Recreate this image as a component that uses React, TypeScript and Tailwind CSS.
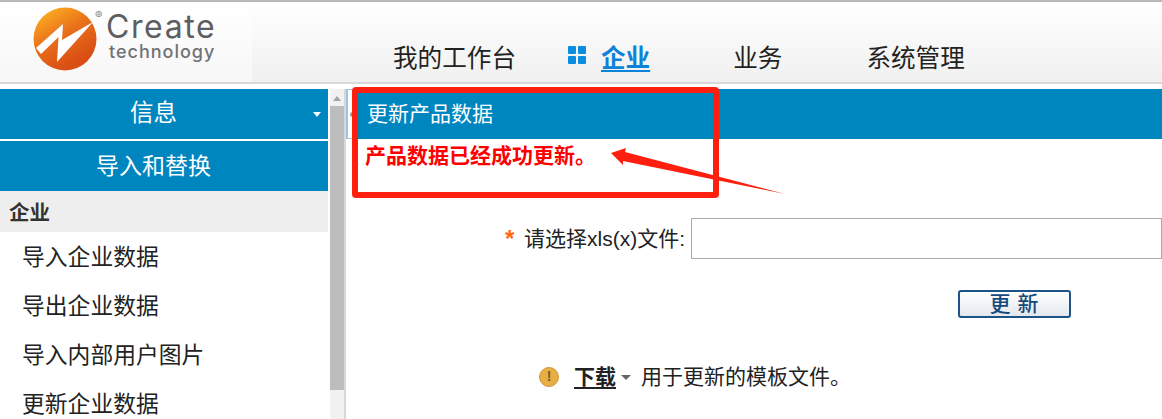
import React from "react";

const font = "font-['Liberation_Sans','Noto_Sans_CJK_SC',sans-serif]";

const Logo = () => (
  <div className="w-[252px] h-full flex items-start pl-[33px] pt-[5px] bg-gradient-to-b from-white to-[#f7f7f7]">
    <svg width="64" height="64" viewBox="0 0 64 64">
      <defs>
        <linearGradient id="orb" x1="0.2" y1="0" x2="0.7" y2="0.85">
          <stop offset="0" stopColor="#fdb022" />
          <stop offset="0.5" stopColor="#e9701a" />
          <stop offset="1" stopColor="#d94e14" />
        </linearGradient>
      </defs>
      <circle cx="32" cy="32" r="31.5" fill="url(#orb)" />
      <path d="M3 41 L30 17 L29 33 L60 15 L24 55 L25.5 30 L8 47 Z" fill="#fff" />
    </svg>
    <div className="relative ml-[9px] mt-[4px] text-[#5c5e60] font-['Inter',sans-serif]">
      <div className="text-[32px] leading-[32px] tracking-[1.6px]">Create</div>
      <div className="text-[18px] leading-[18px] tracking-[1px] ml-[3px] font-medium text-[#707274]">technology</div>
      <span className="absolute -left-[11px] -top-[1px] text-[11px] leading-none text-[#888]">®</span>
    </div>
  </div>
);

const Nav = () => (
  <nav className="flex items-center pl-[141px] pt-[34px] text-[24.6px] leading-[34px] text-[#222]">
    <span>我的工作台</span>
    <span className="grid grid-cols-2 gap-[2px] w-[18px] ml-[52px] mb-[8px]">
      <i className="w-[8px] h-[8px] rounded-[1px] bg-[#0a8ce0]" />
      <i className="w-[8px] h-[8px] rounded-[1px] bg-[#0a8ce0]" />
      <i className="w-[8px] h-[8px] rounded-[1px] bg-[#0a8ce0]" />
      <i className="w-[8px] h-[8px] rounded-[1px] bg-[#0a8ce0]" />
    </span>
    <span className="ml-[15px] text-[#0b83d9] font-bold underline underline-offset-[3px]">企业</span>
    <span className="ml-[83px]">业务</span>
    <span className="ml-[84px]">系统管理</span>
  </nav>
);

const Sidebar = () => (
  <aside className="w-[346px] shrink-0 flex border-r-2 border-[#d8d8d8] h-full">
    <div className="w-[328px] shrink-0">
      <div className="relative h-[50px] bg-[#0086bf] text-white text-[23.5px] flex items-center justify-center pr-[21px] mb-[2px]">
        信息
        <span className="absolute right-[7px] top-[23px] border-x-[4px] border-x-transparent border-t-[5px] border-t-white" />
      </div>
      <div className="h-[50px] bg-[#0086bf] text-white text-[23px] flex items-center justify-center pr-[21px]">导入和替换</div>
      <div className="h-[41px] bg-[#eeeeee] pl-[9px] pt-[4px] flex items-center text-[20.5px] font-bold text-[#333]">企业</div>
      <ul className="pl-[22px] pt-[1px] text-[22.8px] text-[#222]">
        <li className="h-[49px] leading-[49px]">导入企业数据</li>
        <li className="h-[49px] leading-[49px]">导出企业数据</li>
        <li className="h-[49px] leading-[49px]">导入内部用户图片</li>
        <li className="h-[49px] leading-[49px]">更新企业数据</li>
      </ul>
    </div>
    <div className="w-[16px] ml-[2px] bg-[#f1f1f1] flex flex-col items-center">
      <span className="mt-[7px] border-x-[4px] border-x-transparent border-b-[5px] border-b-[#a3a3a3]" />
      <span className="mt-[5px] w-[14px] h-[284px] bg-[#bdbdbd]" />
    </div>
  </aside>
);

const Main = () => (
  <main className="flex-1 min-w-0">
    <div className="flex h-[50px]">
      <div className="w-[12px] shrink-0 flex items-center border-l-[2px] border-y border-[#9cc4e4] bg-white pl-[2px]">
        <span className="w-[5px] h-[5px] rounded-full bg-[#999]" />
      </div>
      <div className="flex-1 bg-[#0086bf] text-white text-[21px] flex items-center pl-[9px]">更新产品数据</div>
    </div>
    <p className="pl-[19px] pt-[3px] text-[21px] leading-[28px] font-bold text-[#ff0000]">产品数据已经成功更新。</p>
    <div className="flex items-center mt-[48px] h-[41px] text-[21px] text-[#222]">
      <span className="ml-[159px] w-[19px] text-[24px] font-bold text-[#ff6a13]">*</span>
      <span>请选择xls(x)文件:</span>
      <div className="ml-[6px] flex-1 h-[41px] border border-[#aaaaaa] bg-white" />
    </div>
    <div className="flex justify-end pr-[91px] mt-[31px]">
      <button className="w-[113px] h-[28px] rounded-[3px] border-2 border-[#1c5488] bg-gradient-to-b from-white to-[#e4e8ee] text-[#174a7c] font-medium text-[21px] leading-[22px] tracking-[7px] pl-[6px]">更新</button>
    </div>
    <div className="flex items-center ml-[193px] mt-[43px] text-[21px] text-[#222]">
      <span className="w-[20px] h-[20px] rounded-full bg-[#e6ae45] border border-[#d0963a] text-[#7a5a20] text-[14px] font-bold flex items-center justify-center">!</span>
      <span className="ml-[15px] font-bold underline underline-offset-[3px]">下载</span>
      <span className="ml-[5px] mr-[10px] mt-[2px] border-x-[5px] border-x-transparent border-t-[5px] border-t-[#666]" />
      <span>用于更新的模板文件。</span>
    </div>
  </main>
);

const App = () => (
  <div className={`relative w-[1162px] h-[419px] overflow-hidden bg-white ${font}`}>
    <header className="flex h-[84px] border-t-[2px] border-b-[2px] border-t-[#b9b9b9] border-b-[#d9d9d9] bg-gradient-to-b from-white to-[#f0f0f0]">
      <Logo />
      <Nav />
    </header>
    <div className="flex mt-[5px] h-[330px]">
      <Sidebar />
      <Main />
    </div>

    {/* red markup drawn over the screenshot */}
    <div className="absolute left-[352px] top-[87px] w-[367px] h-[111px] rounded-[4px] border-[6px] border-[#ff1f0f]" />
    <svg className="absolute left-[605px] top-[140px]" width="190" height="60" viewBox="0 0 190 60">
      <path d="M6 13 L21 8 L20 12 L180 54 L18 21 L18 25 Z" fill="#ff1f0f" />
    </svg>
  </div>
);

export default App;
